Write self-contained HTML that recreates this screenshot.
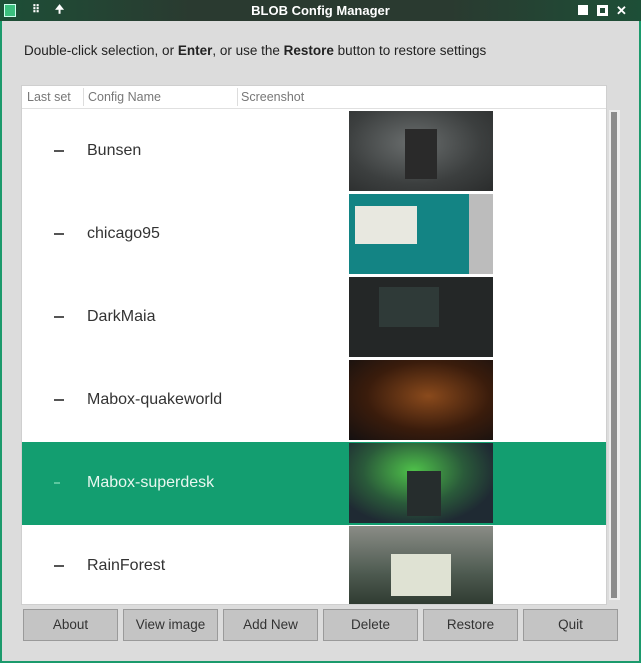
<!DOCTYPE html>
<html><head><style>
*{margin:0;padding:0;box-sizing:border-box}
body{width:641px;height:663px;background:#dcdcdc;font-family:"Liberation Sans",sans-serif;position:relative;overflow:hidden}
.frame{position:absolute;left:0;top:0;width:641px;height:663px;border:2px solid #1b9a6c;border-top:none}
.title{position:absolute;left:0;top:0;width:641px;height:21px;background:linear-gradient(90deg,#1d4f37,#2a3a30 30%,#2a3a30 70%,#1d4f37);color:#fff;font-weight:bold;font-size:13px;text-align:center;line-height:21px}
.msg{position:absolute;left:24px;top:43px;font-size:13.5px;color:#222}
.list{position:absolute;left:21px;top:85px;width:586px;height:520px;background:#fff;border:1px solid #cfcfcf;overflow:hidden}
.hdr{height:23px;border-bottom:1px solid #e0e0e0;font-size:12.5px;color:#777;position:relative}
.hdr span{position:absolute;top:4px}
.hdr i{position:absolute;top:2px;width:1px;height:18px;background:#ddd}
.row{position:absolute;left:0;width:586px;height:83px}
.row .d{position:absolute;left:32px;top:40px;width:10px;height:1.5px;background:#555}
.row .n{position:absolute;left:65px;top:32px;font-size:16px;color:#333}
.row .t{position:absolute;left:327px;top:1px;width:144px;height:80px}
.sel{background:#139e70}
.sel .n{color:#e8f7f0}
.sel .d{background:#5cc79f}
.scroll{position:absolute;left:609px;top:110px;width:11px;height:490px;background:#ececec}
.scroll div{position:absolute;left:2px;top:2px;width:6px;height:486px;background:#8b8b8b}
.btn{position:absolute;top:609px;height:32px;width:95px;background:#c4c4c4;border:1px solid #9a9a9a;font-size:13.5px;color:#333;text-align:center;line-height:30px}
</style></head><body>
<div class="frame"></div>
<div class="title">
<div style="position:absolute;left:4px;top:4px;width:12px;height:13px;background:#3bbf7e;border:1px solid #cfe"></div>
<span style="position:absolute;left:32px;top:0;font-size:11px">⠿</span>
<span style="position:absolute;left:55px;top:0;font-size:11px">🠉</span>
BLOB Config Manager
<div style="position:absolute;left:578px;top:5px;width:10px;height:10px;background:#fff"></div>
<div style="position:absolute;left:597px;top:5px;width:11px;height:11px;border:3px solid #fff"></div>
<span style="position:absolute;left:616px;top:0;font-size:13px">✕</span>
</div>
<div class="msg">Double-click selection, or <b>Enter</b>, or use the <b>Restore</b> button to restore settings</div>
<div class="list">
<div class="hdr"><span style="left:5px">Last set</span><i style="left:61px"></i><span style="left:66px">Config Name</span><i style="left:215px"></i><span style="left:219px">Screenshot</span></div>
<div class="row" style="top:24px"><div class="d"></div><div class="n">Bunsen</div><div class="t" style="background:radial-gradient(ellipse at 45% 40%,#6a6e6e,#3c3f3f 60%,#2a2c2c)"><div style="position:absolute;left:56px;top:18px;width:32px;height:50px;background:#2a2a2a"></div></div></div>
<div class="row" style="top:107px"><div class="d"></div><div class="n">chicago95</div><div class="t" style="background:#138484"><div style="position:absolute;left:6px;top:12px;width:62px;height:38px;background:#e8e8e0"></div><div style="position:absolute;right:0;top:0;width:24px;height:80px;background:#bcbcbc"></div></div></div>
<div class="row" style="top:190px"><div class="d"></div><div class="n">DarkMaia</div><div class="t" style="background:#242727"><div style="position:absolute;left:30px;top:10px;width:60px;height:40px;background:#2f3a38"></div></div></div>
<div class="row" style="top:273px"><div class="d"></div><div class="n">Mabox-quakeworld</div><div class="t" style="background:radial-gradient(ellipse at 55% 45%,#8a4a1c,#3a1c0c 55%,#141010)"></div></div>
<div class="row sel" style="top:356px"><div class="d" style="width:6px"></div><div class="n">Mabox-superdesk</div><div class="t" style="background:radial-gradient(ellipse at 45% 35%,#4fc24a,#2a5a3a 45%,#1f2a33 75%)"><div style="position:absolute;left:58px;top:28px;width:34px;height:45px;background:#262d2d"></div></div></div>
<div class="row" style="top:439px"><div class="d"></div><div class="n">RainForest</div><div class="t" style="background:linear-gradient(180deg,#8a8c86,#4d5a50 60%,#2e3a30)"><div style="position:absolute;left:42px;top:28px;width:60px;height:42px;background:#dfe2d3"></div></div></div>
</div>
<div class="scroll"><div></div></div>
<div class="btn" style="left:23px">About</div>
<div class="btn" style="left:123px">View image</div>
<div class="btn" style="left:223px">Add New</div>
<div class="btn" style="left:323px">Delete</div>
<div class="btn" style="left:423px">Restore</div>
<div class="btn" style="left:523px">Quit</div>
</body></html>
